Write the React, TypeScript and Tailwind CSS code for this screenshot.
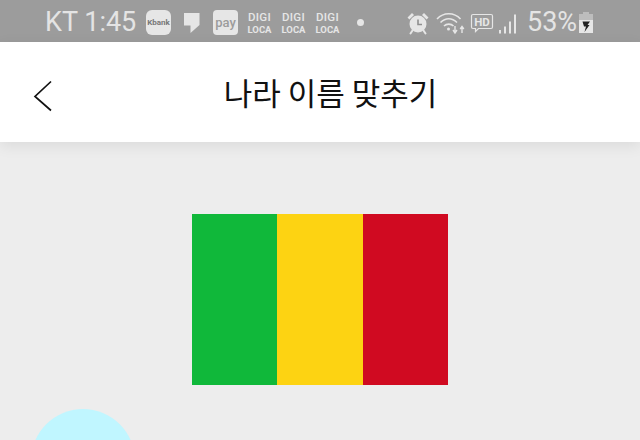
const sans = "font-['Roboto','Liberation_Sans',sans-serif]";

function Digi() {
  return (
    <div className={`w-[23px] mb-[1px] flex flex-col items-center text-[#e6e6e6] ${sans}`}>
      <span className="text-[11.500px] leading-[14px] tracking-[0.3px] font-medium">DIGI</span>
      <span className="text-[9.500px] leading-[11px] font-bold">LOCA</span>
    </div>
  );
}

function Alarm() {
  return (
    <svg width="24" height="24" viewBox="0 0 24 24" fill="none">
      <circle cx="12" cy="13" r="8.500" fill="#e6e6e6" />
      <path d="M12 8.500V13.500H16" stroke="#8f8f8f" strokeWidth="1.600" fill="none" />
      <path d="M1.500 6.500 6 2 8 4 3.400 8.500Z M22.500 6.500 18 2 16 4 20.600 8.500Z" fill="#e6e6e6" />
      <path d="M6.500 19.500 4.500 22.500M17.500 19.500 19.500 22.500" stroke="#e6e6e6" strokeWidth="2" strokeLinecap="round" />
    </svg>
  );
}

function Wifi() {
  return (
    <svg width="30" height="24" viewBox="0 0 30 24" fill="none" stroke="#e6e6e6" strokeWidth="1.600">
      <path d="M1 8C7.500 1 18 1 24.500 8" />
      <path d="M4.500 11.500C9.500 6.500 16 6.500 21 11.500" />
      <path d="M8 15C10.500 12.500 15 12.500 17.500 15" />
      <circle cx="12.500" cy="18" r="1.500" fill="#e6e6e6" stroke="none" />
      <path d="M19 15V21.500M17 19 19 22 21 19" strokeWidth="1.400" />
      <path d="M26 22V16M24.200 18 26 15.500 27.800 18" strokeWidth="1.400" />
    </svg>
  );
}

function Hd() {
  return (
    <svg width="24" height="24" viewBox="0 0 24 24" fill="none">
      <path d="M3 3.500H21A1.500 1.500 0 0 1 22.500 5V16A1.500 1.500 0 0 1 21 17.500H8.500L5.500 20.500V17.500H3A1.500 1.500 0 0 1 1.500 16V5A1.500 1.500 0 0 1 3 3.500Z" stroke="#e6e6e6" strokeWidth="1.200" />
      <text x="12" y="15" textAnchor="middle" fontSize="11.500" fontWeight="700" fontFamily="Roboto, sans-serif" fill="#e6e6e6">HD</text>
    </svg>
  );
}

function Signal() {
  return (
    <svg width="20" height="24" viewBox="0 0 20 24" fill="#e6e6e6">
      <rect x="1" y="19" width="2" height="3.500" />
      <rect x="6" y="15.500" width="2" height="7" />
      <rect x="11" y="10.500" width="2" height="12" />
      <rect x="16" y="3.500" width="2" height="19" />
    </svg>
  );
}

function Battery() {
  return (
    <svg width="14" height="24" viewBox="0 0 14 24">
      <rect x="4" y="1" width="6" height="3" fill="#bdbdbd" />
      <rect x="0" y="3" width="14" height="6" fill="#bdbdbd" />
      <rect x="0" y="9" width="14" height="13" fill="#e6e6e6" />
      <path d="M3.500 10.500H11L8.500 14H10.500L5.500 21 7 15.500H5Z" fill="#222222" />
    </svg>
  );
}

function SpeechBubble() {
  return (
    <svg width="16" height="20" viewBox="0 0 16 20" fill="#e6e6e6">
      <path d="M0 0H15.500V12L6.500 20V12.500H0Z" />
    </svg>
  );
}

export default function App() {
  return (
    <div className="w-[640px] h-[440px] overflow-hidden bg-[#ededed] flex flex-col">
      <div className="h-[42px] shrink-0 bg-[#9c9c9c] flex items-center pl-[45px] pt-[3px]">
        <span className={`text-[27px] leading-none text-[#e4e4e4] w-[101px] whitespace-nowrap ${sans}`}>KT 1:45</span>
        <div className="w-[25px] h-[25px] rounded-[6px] bg-[#e6e6e6] flex items-center justify-center mr-[13px]">
          <span className={`text-[8px] font-bold text-[#777777] ${sans}`}>Kbank</span>
        </div>
        <SpeechBubble />
        <div className="w-[25px] h-[25px] ml-[13px] rounded-[4px] bg-[#e6e6e6] flex items-center justify-center mr-[10px]">
          <span className={`text-[13px] font-medium text-[#9c9c9c] ${sans}`}>pay</span>
        </div>
        <div className="flex gap-[11px]">
          <Digi />
          <Digi />
          <Digi />
        </div>
        <div className="w-[7px] h-[7px] rounded-full bg-[#e6e6e6] ml-[18px] mr-[42px]" />
        <Alarm />
        <div className="ml-[6px]"><Wifi /></div>
        <div className="ml-[4px]"><Hd /></div>
        <div className="ml-[4px]"><Signal /></div>
        <span className={`text-[27px] leading-none text-[#e4e4e4] ml-[9px] w-[52px] ${sans}`}>53%</span>
        <Battery />
      </div>

      <div className="h-[100px] shrink-0 bg-white relative flex items-center justify-center pl-[21px] pb-[2px] shadow-[0_4px_14px_rgba(0,0,0,0.08)]">
        <svg className="absolute left-[33px] top-[38px]" width="20" height="32" viewBox="0 0 20 32" fill="none" stroke="#111111" strokeWidth="1.700">
          <path d="M18 1.500 2 16.500 18 30.500" />
        </svg>
        <span className="text-[31px] leading-none text-[#111111] font-normal font-['Noto_Sans_CJK_KR',sans-serif]">나라 이름 맞추기</span>
      </div>

      <div className="flex-1 pt-[72px]">
        <div className="w-[256px] h-[171px] mx-auto flex">
          <div className="flex-1 bg-[#10b83a]" />
          <div className="flex-1 bg-[#fdd312]" />
          <div className="flex-1 bg-[#d00a21]" />
        </div>
        <div className="w-[104px] h-[104px] rounded-full bg-[#c0f6ff] ml-[31px] mt-[24px]" />
      </div>
    </div>
  );
}
